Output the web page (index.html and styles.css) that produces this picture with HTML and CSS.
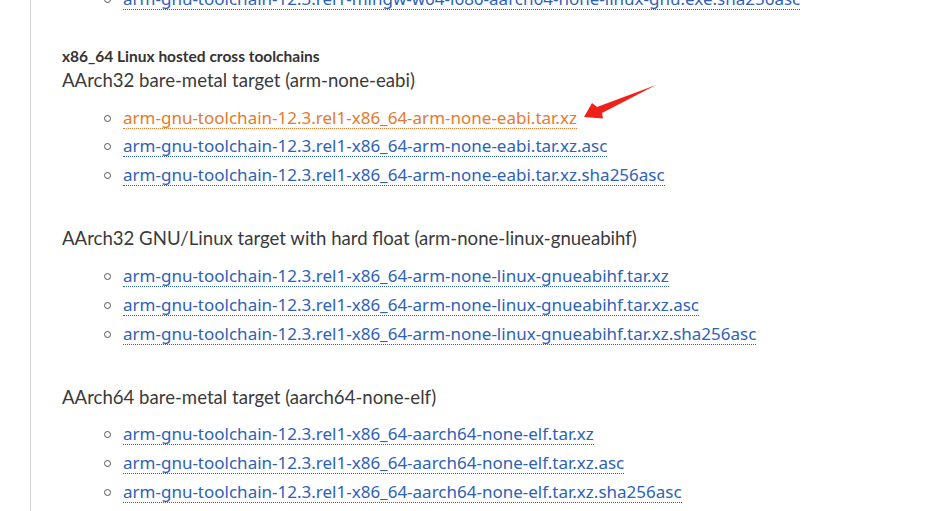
FILE: index.html
```html
<!DOCTYPE html>
<html lang="en">
<head>
<meta charset="utf-8">
<title>Downloads</title>
<link rel="stylesheet" href="styles.css">
</head>
<body>
<div class="page">
  <div class="content">
    <ul class="files files-top">
      <li><a class="file" href="#">arm-gnu-toolchain-12.3.rel1-mingw-w64-i686-aarch64-none-linux-gnu.exe.sha256asc</a></li>
    </ul>

    <h4 class="host">x86_64 Linux hosted cross toolchains</h4>

    <section class="target">
      <p class="target-title first">AArch32 bare-metal target (arm-none-eabi)</p>
      <ul class="files">
        <li><a class="file visited" href="#">arm-gnu-toolchain-12.3.rel1-x86_64-arm-none-eabi.tar.xz</a></li>
        <li><a class="file" href="#">arm-gnu-toolchain-12.3.rel1-x86_64-arm-none-eabi.tar.xz.asc</a></li>
        <li><a class="file" href="#">arm-gnu-toolchain-12.3.rel1-x86_64-arm-none-eabi.tar.xz.sha256asc</a></li>
      </ul>
    </section>

    <section class="target">
      <p class="target-title">AArch32 GNU/Linux target with hard float (arm-none-linux-gnueabihf)</p>
      <ul class="files">
        <li><a class="file" href="#">arm-gnu-toolchain-12.3.rel1-x86_64-arm-none-linux-gnueabihf.tar.xz</a></li>
        <li><a class="file" href="#">arm-gnu-toolchain-12.3.rel1-x86_64-arm-none-linux-gnueabihf.tar.xz.asc</a></li>
        <li><a class="file" href="#">arm-gnu-toolchain-12.3.rel1-x86_64-arm-none-linux-gnueabihf.tar.xz.sha256asc</a></li>
      </ul>
    </section>

    <section class="target">
      <p class="target-title">AArch64 bare-metal target (aarch64-none-elf)</p>
      <ul class="files">
        <li><a class="file" href="#">arm-gnu-toolchain-12.3.rel1-x86_64-aarch64-none-elf.tar.xz</a></li>
        <li><a class="file" href="#">arm-gnu-toolchain-12.3.rel1-x86_64-aarch64-none-elf.tar.xz.asc</a></li>
        <li><a class="file" href="#">arm-gnu-toolchain-12.3.rel1-x86_64-aarch64-none-elf.tar.xz.sha256asc</a></li>
      </ul>
    </section>
  </div>

  <svg class="arrow" width="80" height="40" viewBox="580 82 80 40" aria-hidden="true">
    <polygon points="656,85 602,113 603,118.5 584,117 592,103 597,107" fill="#f0211a"/>
  </svg>
</div>
</body>
</html>
```

FILE: styles.css
```css
html, body {
  margin: 0;
  padding: 0;
  background: #ffffff;
}

.page {
  position: relative;
  width: 938px;
  height: 511px;
  overflow: hidden;
}

.content {
  display: flow-root;
  margin-left: 30px;
  border-left: 1px solid #d0d0d0;
  padding-left: 31px;
  min-height: 511px;
  box-sizing: border-box;
}

.files {
  list-style: none;
  margin: 0;
  padding: 0 0 0 42px;
}

.files li {
  display: flex;
  align-items: center;
  height: 28.8px;
  font-family: "Noto Sans", "Open Sans", sans-serif;
  font-size: 17px;
}

.files li::before {
  content: "";
  width: 5px;
  height: 5px;
  border: 1px solid #555;
  border-radius: 50%;
  margin-right: 12px;
  flex: none;
}

.files-top {
  margin-top: -15px;
}

.file {
  color: #2d62b8;
  text-decoration: none;
  border-bottom: 1px dotted #2d62b8;
  line-height: 20px;
}

.file.visited {
  color: #e6792e;
  border-bottom-color: #e6792e;
}

.host {
  margin: 32px 0 2px 0;
  font-family: Lato, sans-serif;
  font-weight: 700;
  font-size: 15.5px;
  line-height: 20px;
  color: #333;
}

.target-title {
  margin: 36px 0 12px 0;
  font-family: Lato, sans-serif;
  font-size: 18.6px;
  line-height: 24px;
  color: #3a3a3a;
}

.target-title.first {
  margin-top: 0;
}

.arrow {
  position: absolute;
  left: 580px;
  top: 82px;
}
```
